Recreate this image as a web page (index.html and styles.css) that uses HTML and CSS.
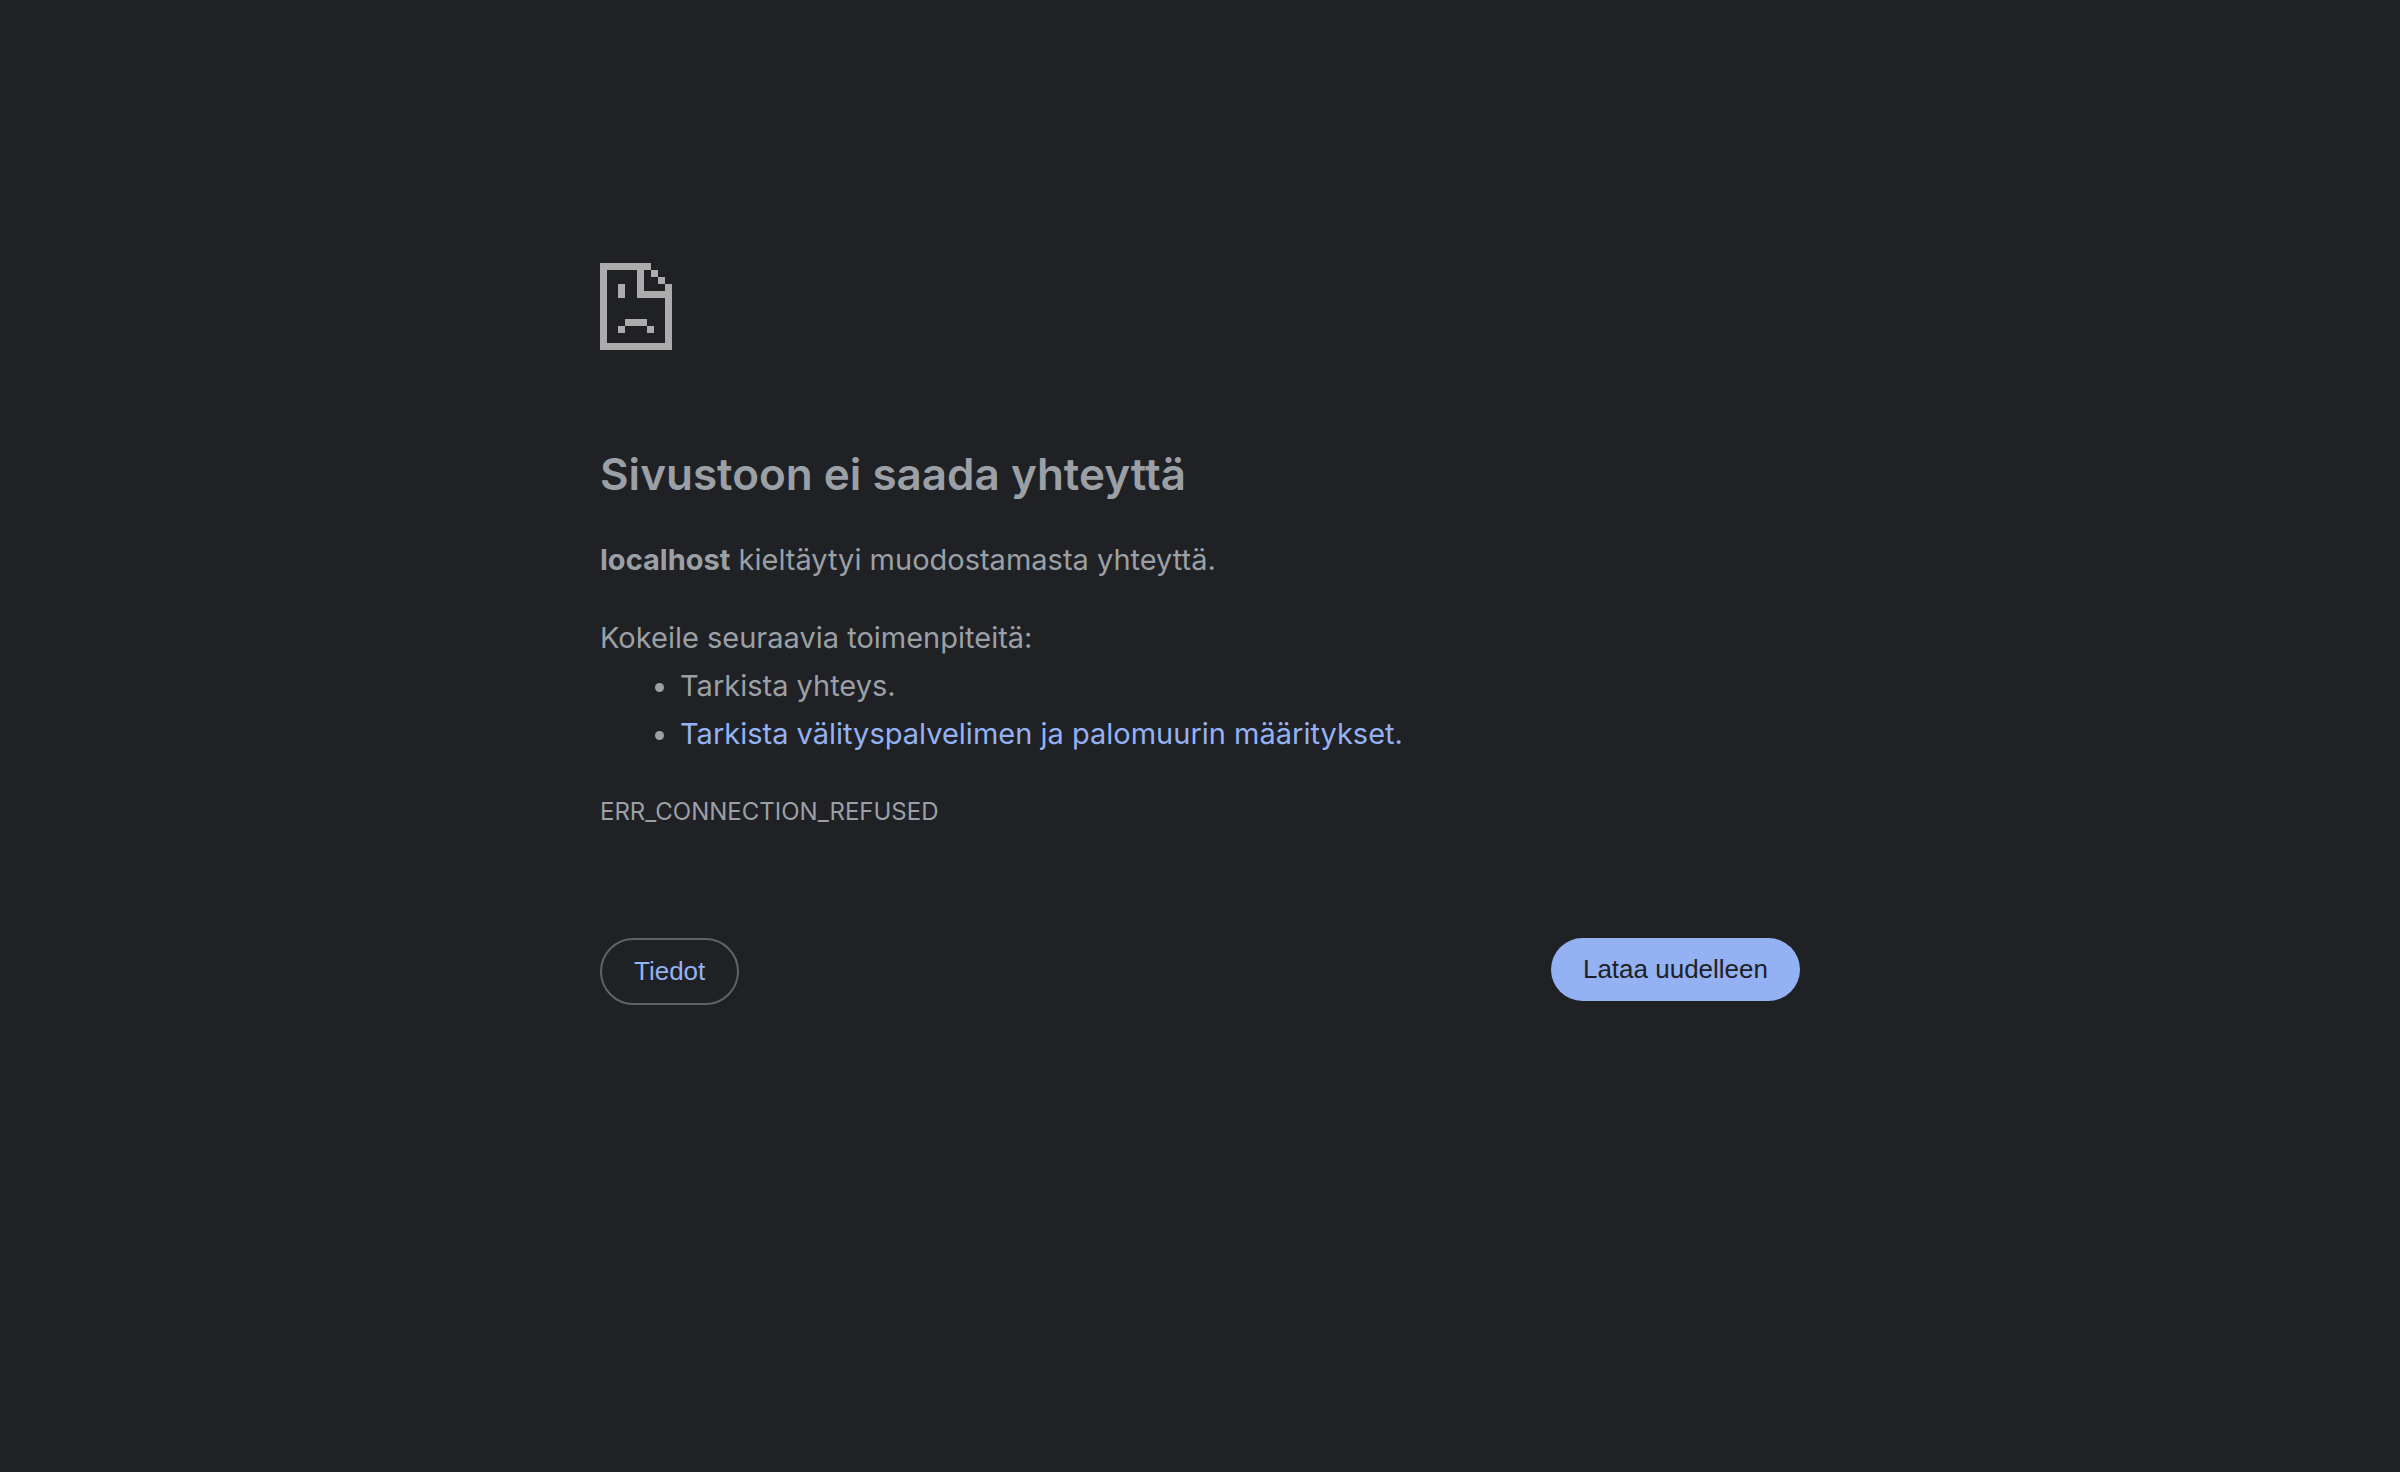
FILE: index.html
```html
<!DOCTYPE html>
<html lang="fi">
<head>
<meta charset="utf-8">
<meta name="viewport" content="width=device-width, initial-scale=1">
<title>localhost</title>
<link rel="stylesheet" href="styles.css">
</head>
<body>
<main class="error-page">
  <svg class="error-icon" viewBox="0 0 72 87" aria-hidden="true" shape-rendering="crispEdges">
    <path d="M0 0H51V7H44V28H65V21H72V87H0ZM7 7V80H65V35H37V7ZM51 7H58V14H51ZM58 14H65V21H58ZM18 21H25V35H18ZM25 56H47V63H25ZM18 63H25V70H18ZM47 63H54V70H47Z" fill="#acacac" fill-rule="evenodd"/>
  </svg>
  <h1 class="title">Sivustoon ei saada yhteyttä</h1>
  <p class="summary"><strong>localhost</strong> kieltäytyi muodostamasta yhteyttä.</p>
  <div class="suggestions">
    <p class="suggestions-intro">Kokeile seuraavia toimenpiteitä:</p>
    <ul class="suggestion-list">
      <li>Tarkista yhteys.</li>
      <li><a class="link" href="#buttons">Tarkista välityspalvelimen ja palomuurin määritykset.</a></li>
    </ul>
  </div>
  <p class="error-code">ERR_CONNECTION_REFUSED</p>
  <div class="buttons" id="buttons">
    <button class="button button-secondary" type="button">Tiedot</button>
    <button class="button button-primary" type="button">Lataa uudelleen</button>
  </div>
</main>
</body>
</html>
```
FILE: styles.css
```css
body {
  margin: 0;
  background: #202124;
  color: #9aa0a6;
  font-family: Inter, "Liberation Sans", sans-serif;
  font-size: 29px;
  font-variant-ligatures: none;
  line-height: 48px;
}

.error-page {
  box-sizing: border-box;
  max-width: 1200px;
  margin: 0 auto;
  padding-top: 263px;
}

.error-icon {
  display: block;
  width: 72px;
  height: 87px;
}

.title {
  margin: 96px 0 34px;
  font-size: 44px;
  font-weight: 600;
  line-height: 56px;
}

.summary {
  margin: 0 0 30px;
}

.suggestions-intro {
  margin: 0;
}

.suggestion-list {
  margin: 0;
  padding-left: 80px;
}

.link {
  color: #94b2f3;
  text-decoration: none;
}

.error-code {
  margin: 30px 0 0;
  font-size: 24px;
}

.buttons {
  display: flex;
  flex-wrap: wrap;
  align-items: flex-start;
  justify-content: space-between;
  gap: 16px;
  margin-top: 102px;
}

.button {
  padding: 16px 32px;
  border: 0;
  border-radius: 40px;
  font-family: "Liberation Sans", Arial, sans-serif;
  font-size: 26px;
  line-height: 31px;
  cursor: pointer;
}

.button-primary {
  background: #94b2f3;
  color: #202124;
}

.button-secondary {
  border: 2px solid #5f6368;
  background: transparent;
  color: #94b2f3;
}
```
